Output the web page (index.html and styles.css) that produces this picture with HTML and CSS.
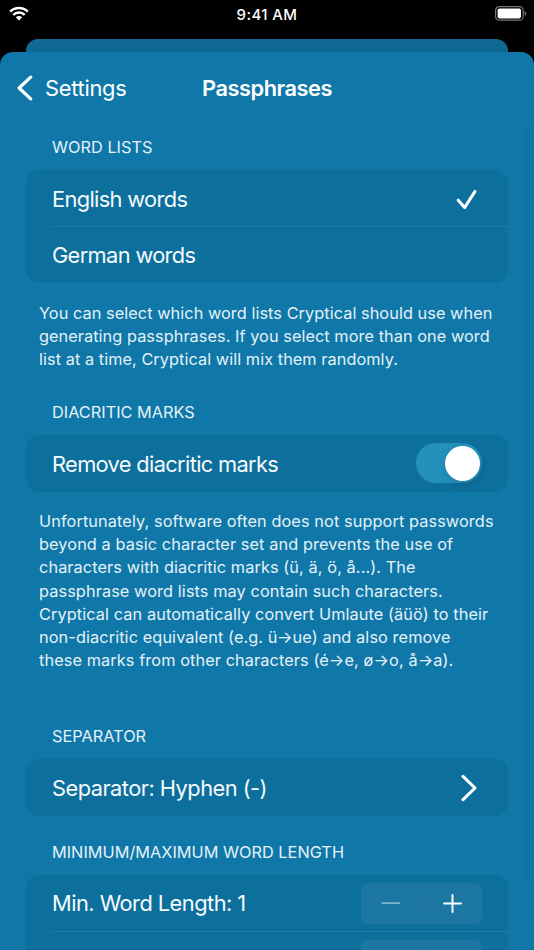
FILE: index.html
```html
<!DOCTYPE html>
<html lang="en">
<head>
    <meta charset="UTF-8">
    <meta name="viewport" content="width=device-width, initial-scale=1.0">
    <title>Passphrases</title>
    <link rel="stylesheet" href="styles.css">
</head>
<body>
    <div class="status-bar">
        <svg class="wifi" width="20" height="15" viewBox="0 0 20 15">
            <path d="M1.2 5.6C6 .9 14 .9 18.8 5.6M4.3 8.9C7.4 5.8 12.6 5.8 15.7 8.9" fill="none" stroke="#fff" stroke-width="2.5"/>
            <path d="M6.8 11.3Q10 8.6 13.2 11.3L10 14.6Z" fill="#fff"/>
        </svg>
        <span class="time">9:41 AM</span>
        <svg class="battery" width="32" height="15" viewBox="0 0 32 15">
            <rect x=".6" y=".6" width="27.6" height="13.6" rx="3.8" fill="none" stroke="#77777b" stroke-width="1.2"/>
            <rect x="2.6" y="2.4" width="23.4" height="10" rx="1.8" fill="#fff"/>
            <path d="M29.7 5v4.8q1.6-.8 1.6-2.4t-1.6-2.4z" fill="#77777b"/>
        </svg>
    </div>

    <div class="back-sheet"></div>

    <main class="sheet">
        <header class="nav">
            <a class="back">
                <svg width="17" height="26" viewBox="0 0 17 26"><path d="M14.7 2.2L3.1 13l11.6 10.8" fill="none" stroke="#fff" stroke-width="3.2" stroke-linecap="round" stroke-linejoin="round"/></svg>
                <span class="back-label">Settings</span>
            </a>
            <h1>Passphrases</h1>
        </header>

        <section class="group">
            <h2>Word Lists</h2>
            <div class="card">
                <div class="row">
                    <span class="label">English words</span>
                    <svg class="check" width="22" height="22" viewBox="0 0 22 22"><path d="M2.2 11.2L8.6 18.6 19 2.4" fill="none" stroke="#fff" stroke-width="3" stroke-linecap="round" stroke-linejoin="round"/></svg>
                </div>
                <div class="row">
                    <span class="label">German words</span>
                </div>
            </div>
            <p class="note tight">You can select which word lists Cryptical should use when<br>
            generating passphrases. If you select more than one word<br>
            list at a time, Cryptical will mix them randomly.</p>
        </section>

        <section class="group diacritics">
            <h2>Diacritic Marks</h2>
            <div class="card">
                <div class="row">
                    <span class="label">Remove diacritic marks</span>
                    <span class="toggle"><span class="knob"></span></span>
                </div>
            </div>
            <p class="note">Unfortunately, software often does not support passwords<br>
            beyond a basic character set and prevents the use of<br>
            characters with diacritic marks (ü, ä, ö, å...). The<br>
            passphrase word lists may contain such characters.<br>
            Cryptical can automatically convert Umlaute (äüö) to their<br>
            non-diacritic equivalent (e.g. ü→ue) and also remove<br>
            these marks from other characters (é→e, ø→o, å→a).</p>
        </section>

        <section class="group separator">
            <h2>Separator</h2>
            <div class="card">
                <div class="row">
                    <span class="label wide">Separator: Hyphen (-)</span>
                    <svg class="chevron" width="18" height="28" viewBox="0 0 18 28"><path d="M3 2.4L15 14 3 25.6" fill="none" stroke="#fff" stroke-width="3.1" stroke-linecap="round" stroke-linejoin="round"/></svg>
                </div>
            </div>
        </section>

        <section class="group word-length">
            <h2>Minimum/Maximum Word Length</h2>
            <div class="card">
                <div class="row">
                    <span class="label wide">Min. Word Length: 1</span>
                    <svg class="stepper" width="121" height="41" viewBox="0 0 121 41">
                        <rect width="121" height="41" rx="7" fill="#1c77a3"/>
                        <path d="M60.5 9v23" stroke="#2b7499" stroke-width="1.3"/>
                        <path d="M21.5 20.2h17" stroke="#83b3cb" stroke-width="1.8" stroke-linecap="round"/>
                        <path d="M83 20.5h17M91.5 12v17" stroke="#fff" stroke-width="1.9" stroke-linecap="round"/>
                    </svg>
                </div>
                <div class="row">
                    <svg class="stepper" width="121" height="41" viewBox="0 0 121 41">
                        <rect width="121" height="41" rx="7" fill="#1c77a3"/>
                        <path d="M60.5 9v23" stroke="#2b7499" stroke-width="1.3"/>
                    </svg>
                </div>
            </div>
        </section>

        <div class="scrollbar"></div>
    </main>
</body>
</html>
```
FILE: styles.css
```css
* {
    box-sizing: border-box;
}

body {
    margin: 0;
    height: 950px;
    overflow: hidden;
    display: flex;
    flex-direction: column;
    background: #000;
    color: #fff;
    font-family: Inter, "Liberation Sans", sans-serif;
}

/* Status bar */
.status-bar {
    flex: none;
    height: 39px;
    padding: 0 7px 13px 9px;
    display: grid;
    grid-template-columns: 1fr auto 1fr;
    align-items: center;
}

.time {
    margin-right: 2px;
    padding-top: 2px;
    font-size: 15px;
    font-weight: 500;
    letter-spacing: 0.4px;
}

.battery {
    justify-self: end;
}

/* Sheets */
.back-sheet {
    flex: none;
    height: 13px;
    margin: 0 26px;
    border-radius: 12px 12px 0 0;
    background: #0f6993;
}

.sheet {
    position: relative;
    flex: none;
    height: 898px;
    overflow: hidden;
    border-radius: 13px 13px 0 0;
    background: #1078a9;
}

.nav {
    height: 72px;
    padding: 0 16px;
    display: grid;
    grid-template-columns: 1fr auto 1fr;
    align-items: center;
}

.back {
    display: flex;
    align-items: center;
    gap: 12px;
}

.back-label {
    font-size: 21.8px;
    letter-spacing: -0.25px;
}

h1 {
    margin: 0;
    font-size: 21.8px;
    font-weight: 600;
    letter-spacing: -0.48px;
}

/* Groups */
.group {
    padding: 0 26px;
}

h2 {
    margin: 0;
    height: 46px;
    padding: 12px 26px 0;
    font-size: 16.3px;
    font-weight: 400;
    line-height: 22px;
    letter-spacing: 0.02px;
    text-transform: uppercase;
    color: #e4f2f8;
}

.card {
    border-radius: 13px;
    background: #0d6f9c;
}

.row {
    position: relative;
    height: 56.67px;
    padding: 0 26px;
    display: flex;
    align-items: center;
    justify-content: space-between;
}

.row + .row::before {
    content: "";
    position: absolute;
    top: -0.7px;
    left: 26px;
    right: 0;
    height: 1px;
    background: #1b7ca8;
}

.label {
    padding-top: 1px;
    font-size: 21.8px;
    letter-spacing: -0.64px;
    color: #f5fafc;
}

.label.wide {
    letter-spacing: -0.52px;
}

.note {
    margin: 0;
    padding: 18.5px 0 0 13px;
    font-size: 16.3px;
    line-height: 23.2px;
    letter-spacing: 0.1px;
    white-space: nowrap;
    color: #e4f2f8;
}

.note.tight {
    letter-spacing: 0.06px;
}

.diacritics {
    padding-top: 17.5px;
}

.separator {
    padding-top: 40.5px;
}

.word-length {
    padding-top: 13px;
}

/* Controls */
.check {
    margin: 3px 4px 0 0;
}

.chevron {
    margin: 2px 4px 0 0;
}

.toggle {
    width: 66px;
    height: 40px;
    padding: 2.5px;
    display: flex;
    justify-content: flex-end;
    border-radius: 20px;
    background: #2491bb;
}

.knob {
    width: 35px;
    height: 35px;
    border-radius: 50%;
    background: #fff;
    box-shadow: 0 3px 8px rgba(0, 0, 0, 0.13);
}

.row .stepper {
    margin: 1px 0 0 auto;
}

.scrollbar {
    position: absolute;
    top: 75px;
    right: 4px;
    width: 4px;
    height: 754px;
    border-radius: 2px;
    background: #1074a3;
}
```
